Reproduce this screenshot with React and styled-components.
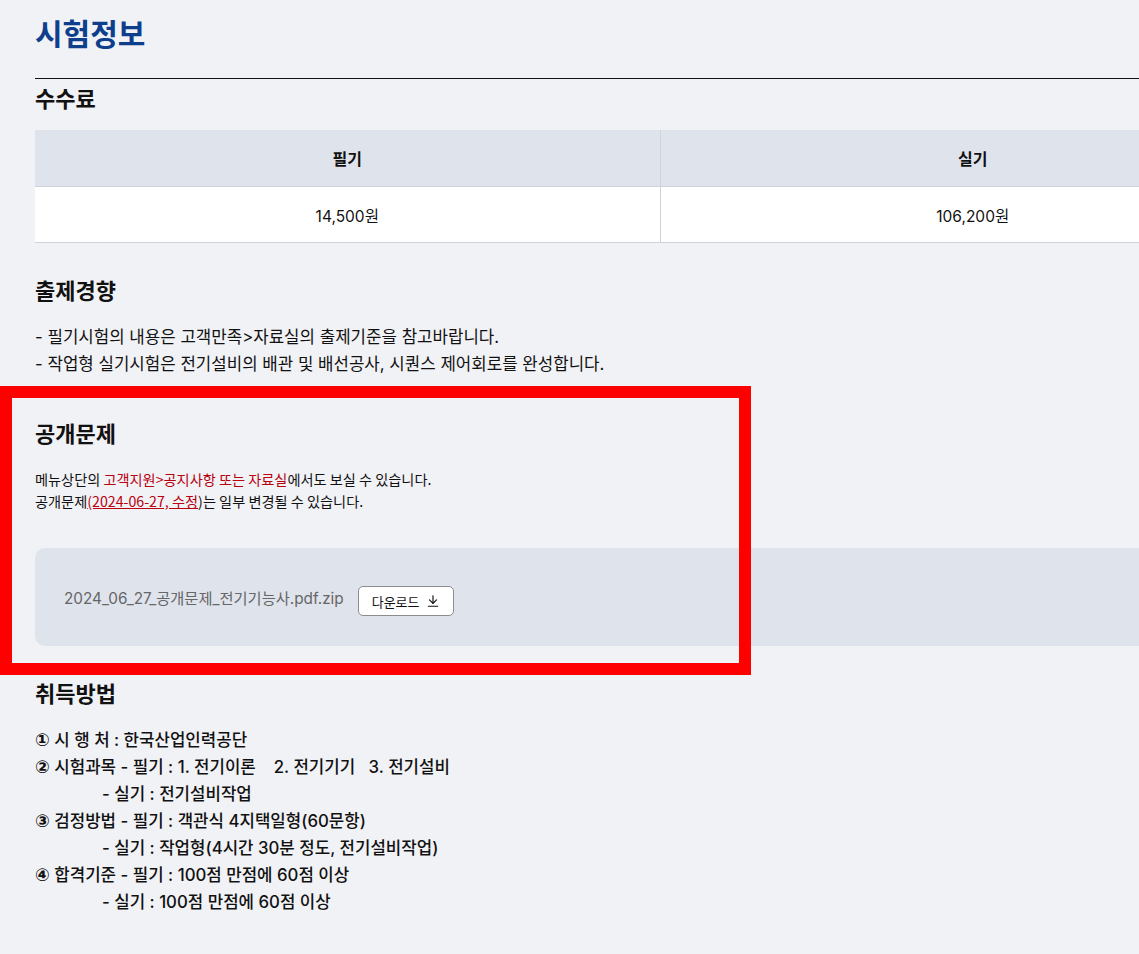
import React from "react";
import styled, { createGlobalStyle } from "styled-components";

const GlobalStyle = createGlobalStyle`
  html, body {
    margin: 0;
    padding: 0;
    background: #f1f2f6;
    overflow-x: hidden;
  }
  body {
    font-family: "Inter", "Noto Sans CJK KR", sans-serif;
    color: #111;
  }
`;

const Page = styled.div`
  width: 1250px;
  padding: 12px 0 40px 35px;
`;

const Title = styled.h1`
  margin: 0;
  font-size: 30px;
  line-height: 44px;
  font-weight: 700;
  color: #0d3f8c;
`;

const Rule = styled.hr`
  margin: 22px 0 0;
  border: 0;
  border-top: 1px solid #111;
`;

const Heading = styled.h2`
  margin: ${(p) => p.$top || 0}px 0 0;
  font-size: 22px;
  line-height: 32px;
  font-weight: 700;
  color: #111;
`;

const FeeTable = styled.table`
  width: 1250px;
  margin-top: 15px;
  border-collapse: collapse;
  table-layout: fixed;
`;

const Th = styled.th`
  height: 56px;
  padding: 0;
  background: #dfe3ec;
  font-size: 16px;
  font-weight: 700;
  text-align: center;
  border-bottom: 1px solid #cfd2d8;
  & + & {
    border-left: 1px solid #cfd2d8;
  }
`;

const Td = styled.td`
  height: 55px;
  padding: 0;
  background: #fff;
  font-size: 15.5px;
  text-align: center;
  border-bottom: 1px solid #cfd2d8;
  & + & {
    border-left: 1px solid #cfd2d8;
  }
`;

const Lines = styled.div`
  margin-top: ${(p) => p.$top || 0}px;
  font-size: ${(p) => p.$size || 16.8}px;
  line-height: ${(p) => p.$lh || 27}px;
  font-weight: ${(p) => p.$weight || 400};
  color: #111;
`;

const SmallLines = styled(Lines)`
  font-family: "Noto Sans CJK KR", sans-serif;
`;

const Line = styled.div`
  white-space: pre;
  padding-left: ${(p) => (p.$indent ? 67 : 0)}px;
`;

const Num = styled.span`
  font-family: "DejaVu Sans", sans-serif;
  font-size: 17.5px;
  font-weight: 700;
`;

const Red = styled.span`
  color: #b8000f;
  text-decoration: ${(p) => (p.$underline ? "underline" : "none")};
`;

const Section = styled.section`
  position: relative;
`;

const Highlight = styled.div`
  position: absolute;
  left: -35px;
  bottom: -29px;
  width: 751px;
  height: 289px;
  box-sizing: border-box;
  border: 12px solid #ff0000;
  pointer-events: none;
`;

const FileBox = styled.div`
  margin-top: 36px;
  height: 98px;
  background: #dfe3ec;
  border-radius: 10px;
  display: flex;
  align-items: center;
  gap: 14px;
  padding-left: 29px;
`;

const FileName = styled.span`
  font-size: 15.3px;
  color: #666;
`;

const DownloadButton = styled.button`
  display: flex;
  align-items: center;
  gap: 6px;
  height: 30px;
  margin-top: 8px;
  padding: 0 13px;
  background: #fff;
  border: 1px solid #8c8c8c;
  border-radius: 5px;
  font-family: inherit;
  font-size: 13px;
  color: #111;
`;

const DownIcon = () => (
  <svg width="14" height="14" viewBox="0 0 24 24" fill="none" stroke="#111" strokeWidth="2" strokeLinecap="round" strokeLinejoin="round">
    <path d="M12 3v13" />
    <path d="M6 10l6 6 6-6" />
    <path d="M4 21h16" />
  </svg>
);

export default function App() {
  return (
    <>
      <GlobalStyle />
      <Page>
        <Title>시험정보</Title>
        <Rule />
        <Heading $top={4}>수수료</Heading>
        <FeeTable>
          <thead>
            <tr>
              <Th>필기</Th>
              <Th>실기</Th>
            </tr>
          </thead>
          <tbody>
            <tr>
              <Td>14,500원</Td>
              <Td>106,200원</Td>
            </tr>
          </tbody>
        </FeeTable>

        <Heading $top={32}>출제경향</Heading>
        <Lines $top={17}>
          <Line>- 필기시험의 내용은 고객만족&gt;자료실의 출제기준을 참고바랍니다.</Line>
          <Line>- 작업형 실기시험은 전기설비의 배관 및 배선공사, 시퀀스 제어회로를 완성합니다.</Line>
        </Lines>

        <Section>
          <Highlight />
          <Heading $top={40}>공개문제</Heading>
          <SmallLines $top={18} $size={14.2} $lh={22}>
            <Line>
              메뉴상단의 <Red>고객지원&gt;공지사항 또는 자료실</Red>에서도 보실 수 있습니다.
            </Line>
            <Line>
              공개문제<Red $underline>(2024-06-27, 수정</Red>)는 일부 변경될 수 있습니다.
            </Line>
          </SmallLines>
          <FileBox>
            <FileName>2024_06_27_공개문제_전기기능사.pdf.zip</FileName>
            <DownloadButton>
              다운로드 <DownIcon />
            </DownloadButton>
          </FileBox>
        </Section>

        <Heading $top={32}>취득방법</Heading>
        <Lines $top={17} $weight={500}>
          <Line><Num>①</Num> 시 행 처 : 한국산업인력공단</Line>
          <Line><Num>②</Num> 시험과목 - 필기 : 1. 전기이론    2. 전기기기   3. 전기설비</Line>
          <Line $indent>- 실기 : 전기설비작업</Line>
          <Line><Num>③</Num> 검정방법 - 필기 : 객관식 4지택일형(60문항)</Line>
          <Line $indent>- 실기 : 작업형(4시간 30분 정도, 전기설비작업)</Line>
          <Line><Num>④</Num> 합격기준 - 필기 : 100점 만점에 60점 이상</Line>
          <Line $indent>- 실기 : 100점 만점에 60점 이상</Line>
        </Lines>
      </Page>
    </>
  );
}
